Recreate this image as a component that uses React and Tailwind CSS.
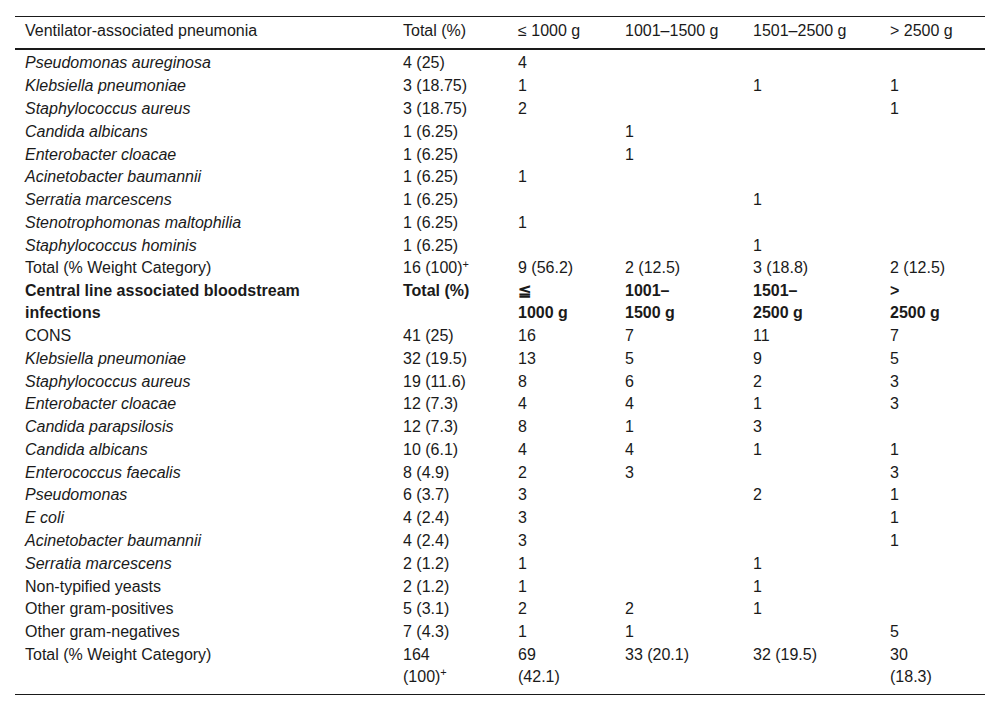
const vapRows = [
  { name: "Pseudomonas aureginosa", italic: true, cells: ["4 (25)", "4", "", "", ""] },
  { name: "Klebsiella pneumoniae", italic: true, cells: ["3 (18.75)", "1", "", "1", "1"] },
  { name: "Staphylococcus aureus", italic: true, cells: ["3 (18.75)", "2", "", "", "1"] },
  { name: "Candida albicans", italic: true, cells: ["1 (6.25)", "", "1", "", ""] },
  { name: "Enterobacter cloacae", italic: true, cells: ["1 (6.25)", "", "1", "", ""] },
  { name: "Acinetobacter baumannii", italic: true, cells: ["1 (6.25)", "1", "", "", ""] },
  { name: "Serratia marcescens", italic: true, cells: ["1 (6.25)", "", "", "1", ""] },
  { name: "Stenotrophomonas maltophilia", italic: true, cells: ["1 (6.25)", "1", "", "", ""] },
  { name: "Staphylococcus hominis", italic: true, cells: ["1 (6.25)", "", "", "1", ""] },
];

const clabsiRows = [
  { name: "CONS", cells: ["41 (25)", "16", "7", "11", "7"] },
  { name: "Klebsiella pneumoniae", italic: true, cells: ["32 (19.5)", "13", "5", "9", "5"] },
  { name: "Staphylococcus aureus", italic: true, cells: ["19 (11.6)", "8", "6", "2", "3"] },
  { name: "Enterobacter cloacae", italic: true, cells: ["12 (7.3)", "4", "4", "1", "3"] },
  { name: "Candida parapsilosis", italic: true, cells: ["12 (7.3)", "8", "1", "3", ""] },
  { name: "Candida albicans", italic: true, cells: ["10 (6.1)", "4", "4", "1", "1"] },
  { name: "Enterococcus faecalis", italic: true, cells: ["8 (4.9)", "2", "3", "", "3"] },
  { name: "Pseudomonas", italic: true, cells: ["6 (3.7)", "3", "", "2", "1"] },
  { name: "E coli", italic: true, cells: ["4 (2.4)", "3", "", "", "1"] },
  { name: "Acinetobacter baumannii", italic: true, cells: ["4 (2.4)", "3", "", "", "1"] },
  { name: "Serratia marcescens", italic: true, cells: ["2 (1.2)", "1", "", "1", ""] },
  { name: "Non-typified yeasts", cells: ["2 (1.2)", "1", "", "1", ""] },
  { name: "Other gram-positives", cells: ["5 (3.1)", "2", "2", "1", ""] },
  { name: "Other gram-negatives", cells: ["7 (4.3)", "1", "1", "", "5"] },
];

const td = "pl-[10px] pr-[6px] py-[0.4px] align-top";
const tdFirst = "pl-[10px] pr-[6px] pt-[2.4px] pb-[0.4px] align-top";
const th = "pl-[10px] pt-[3px] pb-[6px] text-left font-normal";
const tdLast = "pl-[10px] pt-[0.4px] pb-[6px] align-top";

const Row = ({ row, first }) => {
  const cls = first ? tdFirst : td;
  return (
    <tr>
      <td className={`${cls} ${row.italic ? "italic" : ""}`}>{row.name}</td>
      {row.cells.map((c, i) => (
        <td key={i} className={cls}>{c}</td>
      ))}
    </tr>
  );
};

const App = () => {
  return (
    <div className="min-h-screen bg-white pt-4 px-[15px] text-[16px] leading-[22px] text-[#1a1a1a] font-['Liberation_Sans',Arial,sans-serif]">
      <table className="table-fixed border-collapse w-[970px]">
        <colgroup>
          <col className="w-[378px]" />
          <col className="w-[115px]" />
          <col className="w-[107px]" />
          <col className="w-[128px]" />
          <col className="w-[137px]" />
          <col className="w-[105px]" />
        </colgroup>
        <thead>
          <tr className="border-t border-[#1a1a1a] border-b-2">
            <th className={th}>Ventilator-associated pneumonia</th>
            <th className={th}>Total (%)</th>
            <th className={th}>≤ 1000 g</th>
            <th className={th}>1001–1500 g</th>
            <th className={th}>1501–2500 g</th>
            <th className={th}>&gt; 2500 g</th>
          </tr>
        </thead>
        <tbody>
          {vapRows.map((r, i) => (
            <Row key={"v" + r.name} row={r} first={i === 0} />
          ))}
          <tr>
            <td className={td}>Total (% Weight Category)</td>
            <td className={td}>
              16 (100)<sup className="text-[11px]">+</sup>
            </td>
            <td className={td}>9 (56.2)</td>
            <td className={td}>2 (12.5)</td>
            <td className={td}>3 (18.8)</td>
            <td className={td}>2 (12.5)</td>
          </tr>

          {/* second block header */}
          <tr className="font-bold">
            <td className={td}>
              Central line associated bloodstream
              <br />
              infections
            </td>
            <td className={td}>Total (%)</td>
            <td className={td}>
              ≦<br />1000 g
            </td>
            <td className={td}>
              1001–<br />1500 g
            </td>
            <td className={td}>
              1501–<br />2500 g
            </td>
            <td className={td}>
              &gt;<br />2500 g
            </td>
          </tr>
          {clabsiRows.map((r) => (
            <Row key={"c" + r.name} row={r} />
          ))}
          <tr className="border-b border-[#1a1a1a]">
            <td className={tdLast}>Total (% Weight Category)</td>
            <td className={tdLast}>
              164
              <br />
              (100)<sup className="text-[11px]">+</sup>
            </td>
            <td className={tdLast}>
              69
              <br />
              (42.1)
            </td>
            <td className={tdLast}>33 (20.1)</td>
            <td className={tdLast}>32 (19.5)</td>
            <td className={tdLast}>
              30
              <br />
              (18.3)
            </td>
          </tr>
        </tbody>
      </table>
    </div>
  );
};

export default App;
